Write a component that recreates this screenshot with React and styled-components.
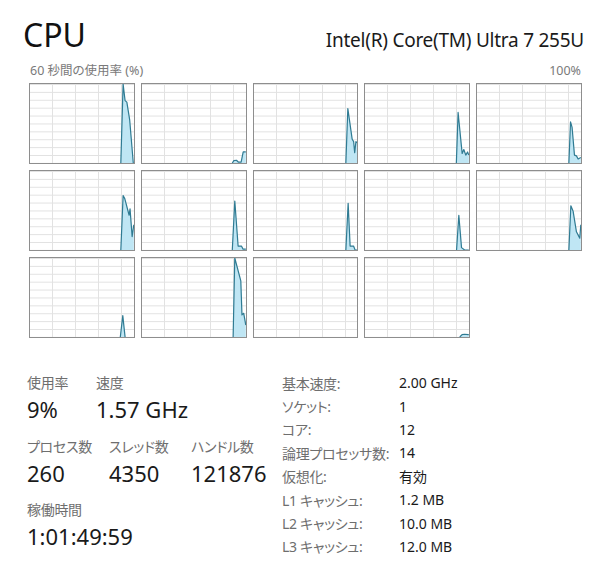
import styled, { createGlobalStyle } from 'styled-components';

const GlobalStyle = createGlobalStyle`
  body {
    margin: 0;
    background: #ffffff;
    font-family: "Noto Sans", "Noto Sans CJK JP", sans-serif;
    font-feature-settings: "palt";
    color: #1a1a1a;
  }
`;

const Page = styled.div`
  width: 600px;
  height: 567px;
  box-sizing: border-box;
  padding: 15px 16px 0 23px;
  overflow: hidden;
`;

const Header = styled.div`
  display: flex;
  justify-content: space-between;
  align-items: baseline;
  height: 40px;
`;

const Title = styled.div`
  font-size: 32px;
  line-height: 40px;
  color: #111;
`;

const Model = styled.div`
  font-size: 19px;
  letter-spacing: -0.25px;
  line-height: 40px;
  color: #1a1a1a;
`;

const Caption = styled.div`
  display: flex;
  justify-content: space-between;
  margin: 8px 3px 0 7px;
  font-size: 12.5px;
  line-height: 16px;
  color: #7a7a7a;
`;

const GraphGrid = styled.div`
  display: grid;
  grid-template-columns: repeat(5, 1fr);
  grid-auto-rows: 81px;
  gap: 6px;
  margin: 4px 2px 0 6px;
`;

const Cell = styled.div`
  box-sizing: border-box;
  border: 1px solid #8e8e8e;
  background-color: #fff;
  background-image: linear-gradient(#e2e2e2 1px, transparent 1px),
    linear-gradient(90deg, #e2e2e2 1px, transparent 1px);
  background-size: 100% 10%, 23px 100%;
  background-position: 0 0, 22px 0;
`;

const Chart = styled.svg`
  display: block;
  width: 100%;
  height: 100%;
`;

const Stats = styled.div`
  display: flex;
  padding-top: 35px;
`;

const LeftStats = styled.div`
  flex: 0 0 259px;
  padding-left: 4px;
  box-sizing: border-box;
  display: flex;
  flex-direction: column;
  gap: 12.5px;
`;

const StatRow = styled.div`
  display: grid;
  grid-template-columns: ${(p) => p.$cols || 'auto'};
`;

const Stat = styled.div`
  display: flex;
  flex-direction: column;
  white-space: nowrap;
`;

const Label = styled.div`
  font-size: 14px;
  line-height: 20px;
  letter-spacing: -0.3px;
  color: #6e6e6e;
`;

const Value = styled.div`
  font-size: 22px;
  line-height: 30px;
  margin-top: 1px;
  color: #1a1a1a;
`;

const Specs = styled.div`
  display: grid;
  grid-template-columns: 117px auto;
  grid-auto-rows: 23.4px;
  align-items: center;
  font-size: 14px;
  white-space: nowrap;
  margin-top: -2px;
`;

const SpecKey = styled.div`
  color: #6e6e6e;
  letter-spacing: -0.3px;
`;

const SpecVal = styled.div`
  color: #1a1a1a;
`;

const graphs = [
  [[87.5, 0], [89.7, 100], [91.6, 79], [93.3, 77], [96, 55], [99.5, 0]],
  [[87, 0], [88.5, 3], [91, 3.5], [93, 1], [95.5, 1], [97.5, 14], [100, 14]],
  [[88.5, 0], [90.4, 69], [94.6, 30], [96, 27], [97, 13], [98.2, 27], [100, 25]],
  [[88, 0], [89.7, 64], [93.6, 12], [95.2, 17], [97.1, 10], [98.8, 14], [100, 10]],
  [[88.5, 0], [90.1, 52], [91.6, 45], [93.9, 10], [95.8, 9], [97.4, 5], [100, 7]],
  [[87.5, 0], [89.7, 69], [91.3, 65], [95.5, 44], [96.4, 52], [98.4, 17], [100, 32]],
  [[87, 0], [89.4, 62], [92.6, 5], [95.8, 5], [97.4, 1], [100, 1]],
  [[88.5, 0], [90.7, 59], [92.6, 5], [95.9, 5], [97.4, 0], [100, 0]],
  [[88.2, 0], [90.4, 44], [93, 3], [96, 0], [100, 0]],
  [[88.5, 0], [90.4, 56], [92.6, 49], [95.8, 23], [99, 15], [100, 32]],
  [[87, 0], [89.4, 27], [91.6, 0]],
  [[87.8, 0], [89.4, 100], [95.2, 71], [96.3, 28], [98, 30], [100, 15]],
  [],
  [[91.3, 0], [93.5, 3], [96, 3.5], [99.4, 3], [100, 3]],
];

function UsageGraph({ points }) {
  if (!points.length) return <Cell />;
  const line = points.map(([x, u]) => `${x},${100 - u}`).join(' ');
  const first = points[0][0];
  const last = points[points.length - 1][0];
  const area = `${first},100 ${line} ${last},100`;
  return (
    <Cell>
      <Chart viewBox="0 0 100 100" preserveAspectRatio="none">
        <polygon points={area} fill="#bfe6f4" />
        <polyline
          points={line}
          fill="none"
          stroke="#2f7b93"
          strokeWidth="1.2"
          strokeLinejoin="round"
          vectorEffect="non-scaling-stroke"
        />
      </Chart>
    </Cell>
  );
}

const specs = [
  ['基本速度:', '2.00 GHz'],
  ['ソケット:', '1'],
  ['コア:', '12'],
  ['論理プロセッサ数:', '14'],
  ['仮想化:', '有効'],
  ['L1 キャッシュ:', '1.2 MB'],
  ['L2 キャッシュ:', '10.0 MB'],
  ['L3 キャッシュ:', '12.0 MB'],
];

export default function App() {
  return (
    <>
      <GlobalStyle />
      <Page>
        <Header>
          <Title>CPU</Title>
          <Model>Intel(R) Core(TM) Ultra 7 255U</Model>
        </Header>
        <Caption>
          <span>60 秒間の使用率 (%)</span>
          <span>100%</span>
        </Caption>
        <GraphGrid>
          {graphs.map((points, i) => (
            <UsageGraph key={i} points={points} />
          ))}
        </GraphGrid>
        <Stats>
          <LeftStats>
            <StatRow $cols="69px auto">
              <Stat><Label>使用率</Label><Value>9%</Value></Stat>
              <Stat><Label>速度</Label><Value>1.57 GHz</Value></Stat>
            </StatRow>
            <StatRow $cols="82px 82px auto">
              <Stat><Label>プロセス数</Label><Value>260</Value></Stat>
              <Stat><Label>スレッド数</Label><Value>4350</Value></Stat>
              <Stat><Label>ハンドル数</Label><Value>121876</Value></Stat>
            </StatRow>
            <StatRow>
              <Stat><Label>稼働時間</Label><Value>1:01:49:59</Value></Stat>
            </StatRow>
          </LeftStats>
          <Specs>
            {specs.map(([k, v]) => [
              <SpecKey key={k}>{k}</SpecKey>,
              <SpecVal key={k + 'v'}>{v}</SpecVal>,
            ])}
          </Specs>
        </Stats>
      </Page>
    </>
  );
}
